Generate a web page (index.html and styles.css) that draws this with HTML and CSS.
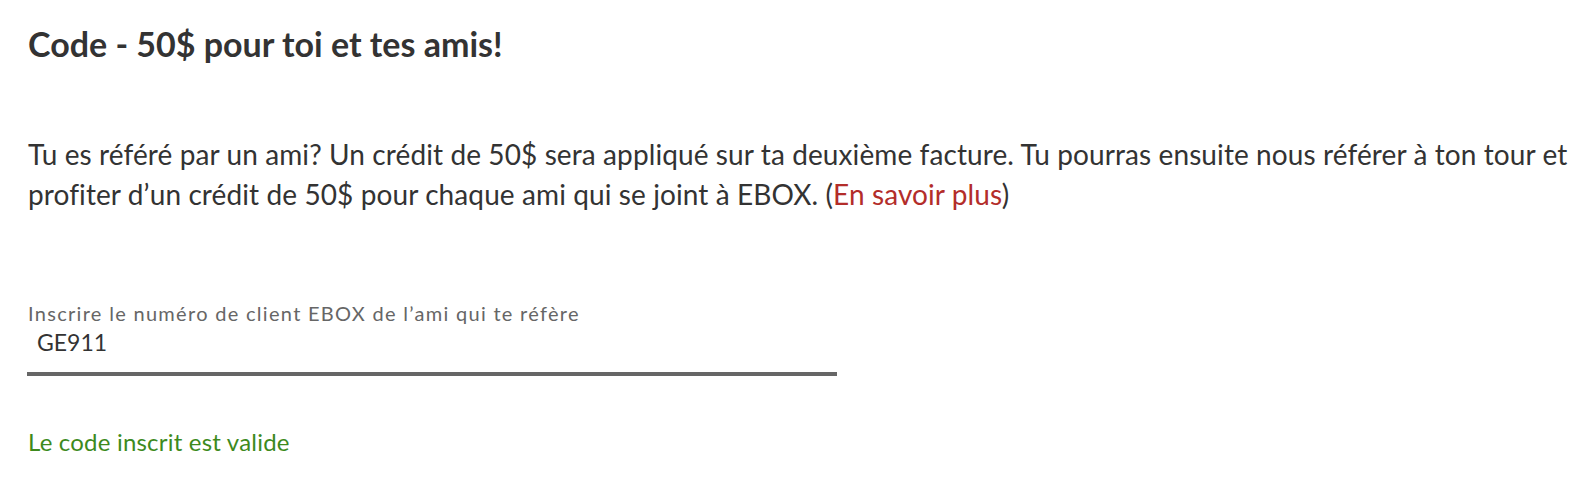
FILE: index.html
```html
<!DOCTYPE html>
<html lang="fr">
<head>
<meta charset="utf-8">
<title>Code - 50$ pour toi et tes amis!</title>
<link rel="stylesheet" href="styles.css">
</head>
<body>
<main class="page">
  <h1 class="title">Code - 50$ pour toi et tes amis!</h1>
  <p class="intro">Tu es référé par un ami? Un crédit de 50$ sera appliqué sur ta deuxième facture. Tu pourras ensuite nous référer à ton tour et profiter d’un crédit de 50$ pour chaque ami qui se joint à EBOX. (<a class="link" href="#">En savoir plus</a>)</p>
  <div class="field">
    <label class="field-label" for="code">Inscrire le numéro de client EBOX de l’ami qui te réfère</label>
    <input class="field-input" id="code" type="text" value="GE911">
  </div>
  <p class="valid">Le code inscrit est valide</p>
</main>
</body>
</html>
```
FILE: styles.css
```css
html, body {
  margin: 0;
  padding: 0;
  background: #ffffff;
}
body {
  font-family: Lato, "Open Sans", sans-serif;
  color: #333333;
}
.page {
  padding: 22px 0 0 28px;
  width: 1540px;
}
.title {
  margin: 0;
  font-size: 34px;
  line-height: 44px;
  font-weight: 700;
  color: #333333;
}
.intro {
  margin: 68px 0 0 0;
  font-size: 28px;
  line-height: 40px;
  letter-spacing: 0.1px;
  font-weight: 400;
  color: #333333;
}
.link {
  color: #b32d2a;
  text-decoration: none;
}
.field {
  margin-top: 87px;
  width: 810px;
  margin-left: -1px;
  display: flex;
  flex-direction: column;
}
.field-label {
  padding-left: 1px;
  font-size: 20px;
  line-height: 24px;
  letter-spacing: 1.3px;
  color: #666666;
}
.field-input {
  box-sizing: border-box;
  width: 100%;
  height: 48px;
  margin: 3px 0 0 0;
  border: none;
  border-bottom: 4px solid #666666;
  outline: none;
  padding: 0 0 16px 10px;
  font-family: Lato, "Open Sans", sans-serif;
  font-size: 23px;
  line-height: 28px;
  color: #333333;
  background: transparent;
}
.valid {
  margin: 52px 0 0 0;
  font-size: 24px;
  line-height: 28px;
  letter-spacing: 0.2px;
  color: #3d8a1d;
}
```
